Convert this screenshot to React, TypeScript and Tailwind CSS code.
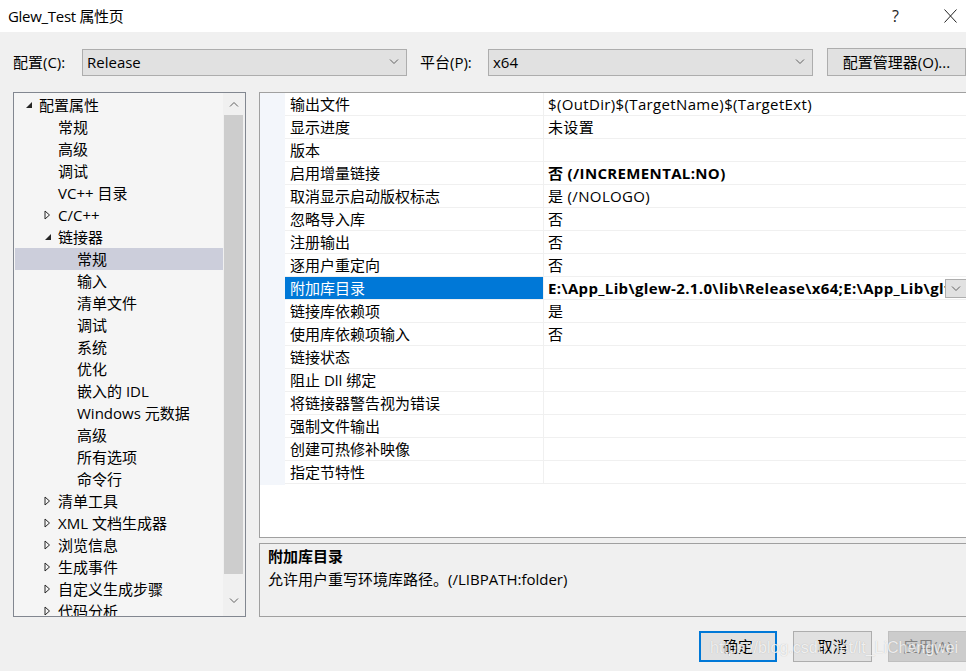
import React from "react";

type TreeNode = { label: string; level: number; arrow?: "open" | "closed"; selected?: boolean };

const tree: TreeNode[] = [
  { label: "配置属性", level: 0, arrow: "open" },
  { label: "常规", level: 1 },
  { label: "高级", level: 1 },
  { label: "调试", level: 1 },
  { label: "VC++ 目录", level: 1 },
  { label: "C/C++", level: 1, arrow: "closed" },
  { label: "链接器", level: 1, arrow: "open" },
  { label: "常规", level: 2, selected: true },
  { label: "输入", level: 2 },
  { label: "清单文件", level: 2 },
  { label: "调试", level: 2 },
  { label: "系统", level: 2 },
  { label: "优化", level: 2 },
  { label: "嵌入的 IDL", level: 2 },
  { label: "Windows 元数据", level: 2 },
  { label: "高级", level: 2 },
  { label: "所有选项", level: 2 },
  { label: "命令行", level: 2 },
  { label: "清单工具", level: 1, arrow: "closed" },
  { label: "XML 文档生成器", level: 1, arrow: "closed" },
  { label: "浏览信息", level: 1, arrow: "closed" },
  { label: "生成事件", level: 1, arrow: "closed" },
  { label: "自定义生成步骤", level: 1, arrow: "closed" },
  { label: "代码分析", level: 1, arrow: "closed" },
];

type Prop = { name: string; value?: string; bold?: boolean; selected?: boolean };

const props: Prop[] = [
  { name: "输出文件", value: "$(OutDir)$(TargetName)$(TargetExt)" },
  { name: "显示进度", value: "未设置" },
  { name: "版本" },
  { name: "启用增量链接", value: "否 (/INCREMENTAL:NO)", bold: true },
  { name: "取消显示启动版权标志", value: "是 (/NOLOGO)" },
  { name: "忽略导入库", value: "否" },
  { name: "注册输出", value: "否" },
  { name: "逐用户重定向", value: "否" },
  { name: "附加库目录", value: "E:\\App_Lib\\glew-2.1.0\\lib\\Release\\x64;E:\\App_Lib\\glfw-3.3\\lib-vc2017", bold: true, selected: true },
  { name: "链接库依赖项", value: "是" },
  { name: "使用库依赖项输入", value: "否" },
  { name: "链接状态" },
  { name: "阻止 Dll 绑定" },
  { name: "将链接器警告视为错误" },
  { name: "强制文件输出" },
  { name: "创建可热修补映像" },
  { name: "指定节特性" },
];

function Chevron({ up = false, className = "" }: { up?: boolean; className?: string }) {
  return (
    <svg width="10" height="6" viewBox="0 0 10 6" className={className}>
      <path d={up ? "M1 5.5 L5 1.5 L9 5.5" : "M1 0.5 L5 4.5 L9 0.5"} fill="none" stroke="currentColor" strokeWidth="1" />
    </svg>
  );
}

function Arrow({ kind }: { kind?: "open" | "closed" }) {
  if (kind === "open")
    return (
      <svg width="8" height="8" viewBox="0 0 8 8">
        <path d="M7 1 L7 7 L1 7 Z" fill="#262626" />
      </svg>
    );
  if (kind === "closed")
    return (
      <svg width="7" height="10" viewBox="0 0 7 10">
        <path d="M1 1 L5.5 5 L1 9 Z" fill="none" stroke="#262626" strokeWidth="1" />
      </svg>
    );
  return null;
}

function Combo({ value, width }: { value: string; width: string }) {
  return (
    <div className={`${width} h-[27px] flex items-center justify-between border border-[#adadad] bg-[#e1e1e1] pl-[4px] pr-[7px]`}>
      <span>{value}</span>
      <Chevron className="text-[#606060]" />
    </div>
  );
}

export default function App() {
  return (
    <div className="relative w-[966px] h-[671px] overflow-hidden bg-[#f0f0f0] text-[15px] text-black font-['Open_Sans','Noto_Sans_CJK_SC',sans-serif] leading-none">
      {/* title bar */}
      <div className="h-[32px] bg-white flex items-center pl-[8px] pr-[8px]">
        <span className="text-[15px] tracking-[-0.3px]">Glew_Test 属性页</span>
        <span className="ml-auto mr-[45px] text-[16px] text-[#222]">?</span>
        <svg width="13" height="14" viewBox="0 0 13 14" className="mr-[1px]">
          <path d="M0.5 0.5 L12.5 13.5 M12.5 0.5 L0.5 13.5" stroke="#222" strokeWidth="1" />
        </svg>
      </div>

      {/* configuration row */}
      <div className="flex items-center h-[28px] mt-[16px] pl-[13px]">
        <span className="w-[69px]">配置(C):</span>
        <Combo value="Release" width="w-[325px]" />
        <span className="ml-[13px] w-[68px]">平台(P):</span>
        <Combo value="x64" width="w-[325px]" />
        <div className="ml-[14px] w-[139px] h-[28px] flex items-center justify-center border border-[#adadad] bg-[#e1e1e1]">
          配置管理器(O)...
        </div>
      </div>

      {/* main area */}
      <div className="flex mt-[16px] h-[525px]">
        {/* tree */}
        <div className="ml-[13px] w-[233px] shrink-0 h-[525px] border border-[#828790] bg-[#f5f5f5] flex">
          <div className="flex-1 min-w-0 overflow-hidden pt-[1px] pl-[1px]">
            {tree.map((n, i) => (
              <div
                key={i}
                className={`h-[22px] flex items-center ${n.selected ? "bg-[#cccedb]" : ""}`}
                style={{ paddingLeft: 10 + n.level * 19 }}
              >
                <span className="w-[14px] shrink-0 flex items-center">
                  <Arrow kind={n.arrow} />
                </span>
                <span className="whitespace-nowrap">{n.label}</span>
              </div>
            ))}
          </div>
          <div className="w-[22px] shrink-0 flex flex-col bg-[#f0f0f0]">
            <div className="h-[22px] flex items-center justify-center text-[#606060]">
              <Chevron up />
            </div>
            <div className="flex-1 px-[1px] pr-[2px]">
              <div className="h-[459px] bg-[#cdcdcd]" />
            </div>
            <div className="h-[22px] flex items-center justify-center text-[#606060] mb-[4px]">
              <Chevron />
            </div>
          </div>
        </div>

        {/* property grid + description */}
        <div className="ml-[13px] w-[709px] shrink-0 flex flex-col">
          <div className="h-[446px] border border-[#a0a0a0] bg-white flex">
            <div className="w-[25px] shrink-0 h-[392px] bg-[#f3f6fb]" />
            <div className="flex-1 min-w-0">
              {props.map((p, i) => (
                <div key={i} className="h-[23px] flex border-b border-[#f0f0f0]">
                  <div
                    className={`w-[259px] shrink-0 flex items-center pl-[5px] border-r border-[#f0f0f0] ${
                      p.selected ? "bg-[#0078d7] text-white" : ""
                    }`}
                  >
                    {p.name}
                  </div>
                  <div className="flex-1 min-w-0 flex items-center pl-[4px] overflow-hidden relative">
                    <span className={`whitespace-nowrap tracking-[0.35px] ${p.bold ? "font-bold" : ""}`}>{p.value}</span>
                    {p.selected && (
                      <div className="absolute right-0 top-[2px] w-[22px] h-[19px] border border-[#adadad] bg-[#e1e1e1] flex items-center justify-center text-[#606060]">
                        <Chevron />
                      </div>
                    )}
                  </div>
                </div>
              ))}
            </div>
          </div>
          <div className="mt-[5px] h-[74px] border border-[#a0a0a0] bg-[#f0f0f0] pl-[8px] pt-[1px]">
            <div className="font-bold h-[22px] flex items-center">附加库目录</div>
            <div className="h-[24px] flex items-center">允许用户重写环境库路径。(/LIBPATH:folder)</div>
          </div>
        </div>
      </div>

      {/* buttons */}
      <div className="flex mt-[14px] pl-[699px] gap-[16px]">
        <div className="w-[78px] shrink-0 h-[31px] border-2 border-[#0078d7] bg-[#e1e1e1] flex items-center justify-center">确定</div>
        <div className="w-[79px] shrink-0 h-[31px] border border-[#adadad] bg-[#e1e1e1] flex items-center justify-center">取消</div>
        <div className="w-[79px] shrink-0 h-[31px] border border-[#bfbfbf] bg-[#cccccc] text-[#838383] flex items-center justify-center">应用(A)</div>
      </div>

      {/* watermark */}
      <div className="absolute left-[710px] top-[640px] text-[16px] text-white/80 [text-shadow:0_0_1px_rgba(0,0,0,0.25)] font-['Liberation_Sans',sans-serif] whitespace-nowrap">
        https://blog.csdn.net/lt_LiChengwei
      </div>
    </div>
  );
}
